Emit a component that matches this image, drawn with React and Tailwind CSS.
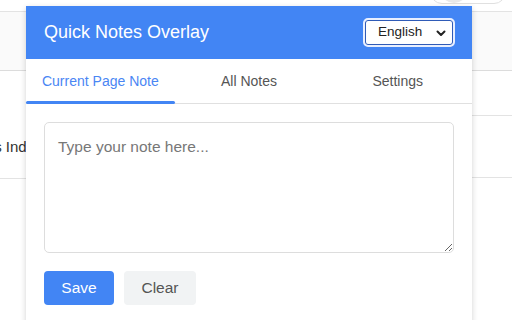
import React from "react";

export default function App() {
  return (
    <div className="relative w-[512px] h-[320px] overflow-hidden bg-white" style={{ fontFamily: '"Liberation Sans", Arial, sans-serif' }}>
      {/* background page */}
      <div className="flex flex-col">
        <div className="h-[12px] border-b border-[#e3e3e3] bg-white"></div>
        <div className="h-[59px] border-b border-[#dcdcdc] bg-[#fafafa]"></div>
        <div className="flex">
          <div className="w-[40px] flex flex-col overflow-hidden">
            <div className="h-[107px] flex items-end pb-[20px]">
              <span className="text-[15px] text-[#333] whitespace-nowrap -ml-[10px]">ts Index</span>
            </div>
            <div className="border-b border-[#e3e3e3]"></div>
          </div>
          <div className="flex-1"></div>
          <div className="w-[40px] flex flex-col">
            <div className="h-[45px] border-b border-[#e3e3e3]"></div>
            <div className="h-[62px] border-b border-[#e3e3e3]"></div>
          </div>
        </div>
      </div>
      <div className="absolute left-[430px] -top-[20px] w-[76px] h-[24px] rounded-full border border-[#e0e0e0] bg-white">
        <div className="absolute left-[9px] -top-[6px] w-[28px] h-[28px] rounded-full bg-[#e8e8e8]"></div>
      </div>

      {/* overlay panel */}
      <div className="absolute left-[26px] top-[6px] w-[446px] h-[340px] bg-white shadow-[0_2px_6px_rgba(0,0,0,0.18)] flex flex-col">
        <div className="h-[53px] bg-[#4285f4] flex items-center justify-between pl-[18px] pr-[17px]">
          <span className="text-white text-[18px]">Quick Notes Overlay</span>
          <div className="w-[92px] h-[29px] rounded-[5px] bg-white border-2 border-[#e8efff] ring-1 ring-[#2f5bb7] ring-inset flex items-center justify-between pl-[13px] pr-[6px]">
            <span className="text-[13.5px] text-[#222]">English</span>
            <svg width="12" height="12" viewBox="0 0 12 12" fill="none">
              <path d="M2.5 4.5 L6 8 L9.5 4.5" stroke="#222" strokeWidth="2" strokeLinecap="round" strokeLinejoin="round" />
            </svg>
          </div>
        </div>
        <div className="flex h-[45px] border-b border-[#e0e0e0]">
          <div className="flex-1 relative flex items-center justify-center text-[14px] text-[#4a86f4]">
            Current Page Note
            <div className="absolute left-0 right-0 bottom-[-1px] h-[3px] rounded-full bg-[#4285f4]"></div>
          </div>
          <div className="flex-1 flex items-center justify-center text-[14px] text-[#555]">All Notes</div>
          <div className="flex-1 flex items-center justify-center text-[14px] text-[#555]">Settings</div>
        </div>
        <div className="p-[18px] flex flex-col gap-[18px]">
          <textarea
            className="w-[410px] h-[131px] border border-[#dddddd] rounded-[5px] px-[13px] py-[12px] text-[15.5px] text-[#333] placeholder:text-[#777] outline-none"
            placeholder="Type your note here..."
            style={{ fontFamily: '"Liberation Sans", Arial, sans-serif' }}
          ></textarea>
          <div className="flex gap-[10px]">
            <button className="h-[34px] w-[70px] rounded-[4px] bg-[#4285f4] text-white text-[15.5px]">Save</button>
            <button className="h-[34px] w-[72px] rounded-[4px] bg-[#f1f3f4] text-[#555] text-[15.5px]">Clear</button>
          </div>
        </div>
      </div>
    </div>
  );
}
